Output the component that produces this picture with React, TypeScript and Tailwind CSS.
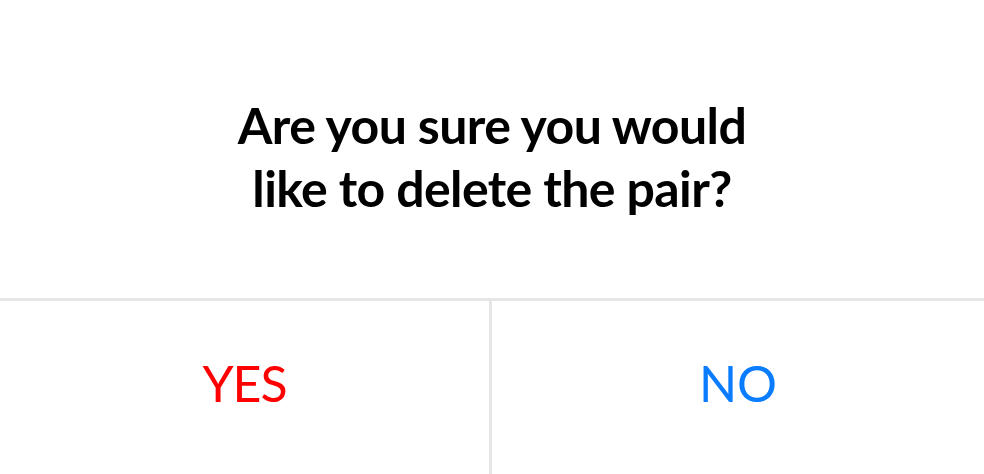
export default function App() {
  return (
    <div className="flex h-[474px] w-full flex-col bg-white" style={{ fontFamily: 'Lato, "Noto Sans", sans-serif' }}>
      <div className="flex h-[298px] items-start justify-center pt-[94px]">
        <h1 className="text-center text-[50px] font-bold leading-[63px] tracking-[-0.6px] text-black">
          Are you sure you would
          <br />
          like to delete the pair?
        </h1>
      </div>
      <div className="flex flex-1 border-t-[3px] border-[#e6e6e6]">
        <button className="flex w-[492px] items-center justify-center border-r-[3px] border-[#e6e6e6] pb-[8px] text-[50px] tracking-[-1px] text-[#ff0000]">
          YES
        </button>
        <button className="flex flex-1 items-center justify-center pb-[8px] text-[50px] text-[#0a7cff]">
          NO
        </button>
      </div>
    </div>
  );
}
